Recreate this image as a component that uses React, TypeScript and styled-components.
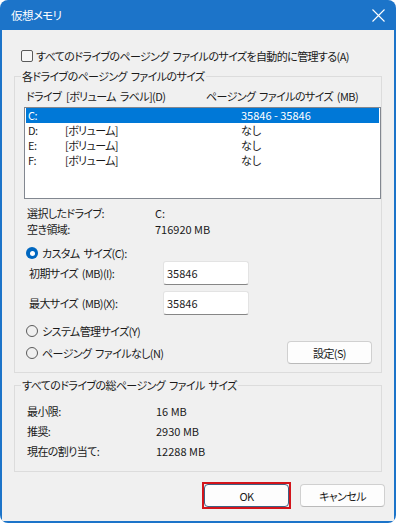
import styled, { createGlobalStyle } from "styled-components";

const GlobalStyle = createGlobalStyle`
  html, body {
    margin: 0;
    padding: 0;
    background: #ffffff;
  }
  body {
    font-family: "Noto Sans CJK JP", "Liberation Sans", sans-serif;
    font-size: 11px;
    letter-spacing: -0.6px;
    word-spacing: 2px;
    font-feature-settings: "palt";
    color: #1a1a1a;
  }
  * {
    box-sizing: border-box;
  }
`;

const Window = styled.div`
  width: 396px;
  height: 523px;
  display: flex;
  flex-direction: column;
  padding: 0 2px 2px 2px;
  background: #1c74c9;
  border-radius: 8px;
  overflow: hidden;
`;

const TitleBar = styled.div`
  height: 30px;
  flex: none;
  display: flex;
  align-items: center;
  justify-content: space-between;
  padding: 0 9px 0 9px;
  color: #ffffff;
`;

const Title = styled.div`
  font-size: 11.5px;
  line-height: 16px;
`;

const CloseIcon = styled.svg`
  width: 13px;
  height: 13px;
  display: block;
`;

const Body = styled.div`
  flex: 1;
  display: flex;
  flex-direction: column;
  padding: 18px 12px 0 12px;
  background: #f0f0f0;
`;

const CheckRow = styled.label`
  display: flex;
  align-items: center;
  gap: 3px;
  height: 16px;
  margin-left: 7px;
  line-height: 16px;
  white-space: nowrap;
`;

const CheckBox = styled.span`
  flex: none;
  width: 12px;
  height: 12px;
  border: 1px solid #5a5a5a;
  border-radius: 2px;
  background: #f7f7f7;
`;

const Group = styled.fieldset<{ $top: number; $bottom: number }>`
  margin: ${(p) => p.$top}px 0 0 0;
  padding: 0 0 ${(p) => p.$bottom}px 9px;
  border: 1px solid #dcdcdc;
  min-width: 0;
`;

const Legend = styled.legend`
  padding: 0 1px;
  margin-left: -3px;
  line-height: 14px;
`;

const HeaderRow = styled.div`
  display: grid;
  grid-template-columns: 40px 140px 1fr;
  height: 14px;
  margin-top: 6px;
  padding-left: 2px;
  line-height: 14px;
  white-space: nowrap;
`;

const ListBox = styled.div`
  height: 92px;
  margin-top: 4px;
  padding: 0 1px;
  border: 1px solid #828790;
  background: #ffffff;
`;

const ListRow = styled.div<{ $selected?: boolean }>`
  display: grid;
  grid-template-columns: 37px 176px 1fr;
  height: 15px;
  padding-left: 2px;
  line-height: 15px;
  white-space: nowrap;
  background: ${(p) => (p.$selected ? "#0078d7" : "transparent")};
  color: ${(p) => (p.$selected ? "#ffffff" : "#1a1a1a")};
`;

const Num = styled.span`
  letter-spacing: 0;
  word-spacing: 0;
`;

const InfoRow = styled.div<{ $top: number; $col: number }>`
  display: grid;
  grid-template-columns: ${(p) => p.$col}px 1fr;
  height: 16px;
  margin-top: ${(p) => p.$top}px;
  padding-left: 3px;
  line-height: 16px;
  white-space: nowrap;
`;

const RadioRow = styled.div<{ $top: number }>`
  display: flex;
  align-items: center;
  justify-content: space-between;
  min-height: 16px;
  margin-top: ${(p) => p.$top}px;
  padding: 0 9px 0 2px;
  line-height: 16px;
  white-space: nowrap;
`;

const RadioLabel = styled.label`
  display: flex;
  align-items: center;
  gap: 4px;
`;

const Radio = styled.span<{ $checked?: boolean }>`
  position: relative;
  flex: none;
  width: 12px;
  height: 12px;
  border-radius: 50%;
  border: ${(p) => (p.$checked ? "none" : "1px solid #5a5a5a")};
  background: ${(p) => (p.$checked ? "#0067c0" : "transparent")};

  &::after {
    content: "";
    display: ${(p) => (p.$checked ? "block" : "none")};
    position: absolute;
    left: 3.5px;
    top: 3.5px;
    width: 5px;
    height: 5px;
    border-radius: 50%;
    background: #ffffff;
  }
`;

const SizeRow = styled.div<{ $top: number }>`
  display: grid;
  grid-template-columns: 134px 86px;
  align-items: center;
  margin-top: ${(p) => p.$top}px;
  padding-left: 5px;
  white-space: nowrap;
`;

const SizeInput = styled.div`
  height: 24px;
  padding: 3px 3px 0 3px;
  line-height: 16px;
  letter-spacing: 0;
  background: #ffffff;
  border: 1px solid #e3e3e3;
  border-bottom-color: #868686;
  border-radius: 3px;
`;

const Button = styled.button<{ $default?: boolean }>`
  width: 85px;
  height: 23px;
  padding: 0;
  font: inherit;
  letter-spacing: inherit;
  color: #1a1a1a;
  background: #fdfdfd;
  border: 1px solid ${(p) => (p.$default ? "#3f6184" : "#d0d0d0")};
  border-bottom-color: ${(p) => (p.$default ? "#3f6184" : "#bababa")};
  border-radius: 4px;
`;

const Highlight = styled.div`
  display: flex;
  border: 2px solid #d3141b;
`;

const Footer = styled.div`
  display: flex;
  align-items: center;
  justify-content: flex-end;
  gap: 9px;
  margin: 10px -3px 0 0;
`;

const drives = [
  { drive: "C:", label: "", size: "35846 - 35846", selected: true },
  { drive: "D:", label: "[ボリューム]", size: "なし" },
  { drive: "E:", label: "[ボリューム]", size: "なし" },
  { drive: "F:", label: "[ボリューム]", size: "なし" },
];

const totals = [
  { label: "最小限:", value: "16 MB" },
  { label: "推奨:", value: "2930 MB" },
  { label: "現在の割り当て:", value: "12288 MB" },
];

const App = () => {
  return (
    <>
      <GlobalStyle />
      <Window>
        <TitleBar>
          <Title>仮想メモリ</Title>
          <CloseIcon viewBox="0 0 13 13">
            <path d="M0.5 0.5L12.5 12.5M12.5 0.5L0.5 12.5" stroke="#ffffff" strokeWidth="1.1" />
          </CloseIcon>
        </TitleBar>
        <Body>
          <CheckRow>
            <CheckBox />
            すべてのドライブのページング ファイルのサイズを自動的に管理する(A)
          </CheckRow>

          <Group $top={5} $bottom={8}>
            <Legend>各ドライブのページング ファイルのサイズ</Legend>
            <HeaderRow>
              <span>ドライブ</span>
              <span>[ボリューム ラベル](D)</span>
              <span>ページング ファイルのサイズ (MB)</span>
            </HeaderRow>
            <ListBox>
              {drives.map((d) => (
                <ListRow key={d.drive} $selected={d.selected}>
                  <span>{d.drive}</span>
                  <span>{d.label}</span>
                  <Num>{d.size}</Num>
                </ListRow>
              ))}
            </ListBox>
            <InfoRow $top={6} $col={128}>
              <span>選択したドライブ:</span>
              <Num>C:</Num>
            </InfoRow>
            <InfoRow $top={0} $col={128}>
              <span>空き領域:</span>
              <Num>716920 MB</Num>
            </InfoRow>
            <RadioRow $top={8}>
              <RadioLabel>
                <Radio $checked />
                カスタム サイズ(C):
              </RadioLabel>
            </RadioRow>
            <SizeRow $top={0}>
              <span>初期サイズ (MB)(I):</span>
              <SizeInput>35846</SizeInput>
            </SizeRow>
            <SizeRow $top={6}>
              <span>最大サイズ (MB)(X):</span>
              <SizeInput>35846</SizeInput>
            </SizeRow>
            <RadioRow $top={8}>
              <RadioLabel>
                <Radio />
                システム管理サイズ(Y)
              </RadioLabel>
            </RadioRow>
            <RadioRow $top={2}>
              <RadioLabel>
                <Radio />
                ページング ファイルなし(N)
              </RadioLabel>
              <Button>設定(S)</Button>
            </RadioRow>
          </Group>

          <Group $top={5} $bottom={12}>
            <Legend>すべてのドライブの総ページング ファイル サイズ</Legend>
            {totals.map((t, i) => (
              <InfoRow key={t.label} $top={i === 0 ? 11 : 4} $col={129}>
                <span>{t.label}</span>
                <Num>{t.value}</Num>
              </InfoRow>
            ))}
          </Group>

          <Footer>
            <Highlight>
              <Button $default>OK</Button>
            </Highlight>
            <Button>キャンセル</Button>
          </Footer>
        </Body>
      </Window>
    </>
  );
};

export default App;
